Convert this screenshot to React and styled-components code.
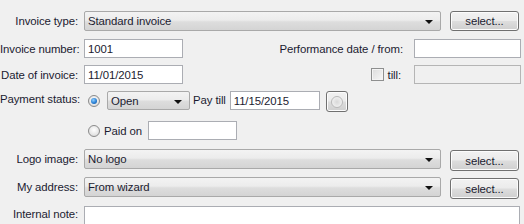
import React from "react";
import styled, { createGlobalStyle, css } from "styled-components";

const GlobalStyle = createGlobalStyle`
  html, body {
    margin: 0;
    padding: 0;
    background: #f0f0f0;
  }
  body {
    font-family: "Liberation Sans", Arial, sans-serif;
    font-size: 11.4px;
    color: #1b1b30;
  }
`;

const Form = styled.div`
  width: 524px;
  height: 224px;
  overflow: hidden;
  padding-top: 11px;
  box-sizing: border-box;
  display: flex;
  flex-direction: column;
`;

const Row = styled.div`
  display: flex;
  align-items: ${(p) => p.$align || "center"};
  height: ${(p) => p.$h}px;
  margin-top: ${(p) => p.$mt || 0}px;
`;

const Label = styled.div`
  width: 78px;
  margin-right: 6px;
  text-align: right;
  white-space: nowrap;
  letter-spacing: -0.1px;
  flex-shrink: 0;
  ${(p) => p.$lh && css`line-height: ${p.$lh}px;`}
`;

const Text = styled.span`
  white-space: nowrap;
  letter-spacing: -0.1px;
  margin-left: ${(p) => p.$ml || 0}px;
  margin-right: ${(p) => p.$mr || 0}px;
  ${(p) => p.$lh && css`line-height: ${p.$lh}px;`}
`;

const Combo = styled.div`
  width: ${(p) => p.$w}px;
  height: ${(p) => p.$h || 20}px;
  box-sizing: border-box;
  border: 1px solid #a9a9a9;
  border-radius: 2px;
  background: linear-gradient(#f3f3f3 0%, #ececec 45%, #dddddd 55%, #d4d4d4 100%);
  display: flex;
  align-items: center;
  padding-left: 3px;
  padding-right: 7px;
  letter-spacing: -0.1px;
  flex-shrink: 0;
  margin-left: ${(p) => p.$ml || 0}px;
`;

const ComboText = styled.span`
  flex: 1;
  white-space: nowrap;
`;

const Arrow = styled.span`
  width: 0;
  height: 0;
  border-left: 4px solid transparent;
  border-right: 4px solid transparent;
  border-top: 4px solid #111;
  margin-top: 2px;
`;

const Button = styled.div`
  width: ${(p) => p.$w}px;
  height: ${(p) => p.$h || 21}px;
  box-sizing: border-box;
  border: 1px solid #707070;
  border-radius: 3px;
  background: linear-gradient(#f2f2f2 0%, #ebebeb 48%, #dddddd 52%, #cfcfcf 100%);
  box-shadow: inset 0 0 0 1px #fcfcfc;
  display: flex;
  align-items: center;
  justify-content: center;
  letter-spacing: -0.1px;
  flex-shrink: 0;
  margin-left: ${(p) => p.$ml || 0}px;
  margin-top: ${(p) => p.$mt || 0}px;
`;

const Input = styled.div`
  width: ${(p) => p.$w}px;
  height: ${(p) => p.$h || 19}px;
  box-sizing: border-box;
  border: 1px solid ${(p) => (p.$disabled ? "#b5b5b5" : "#abadb3")};
  background: ${(p) => (p.$disabled ? "#f0f0f0" : "#ffffff")};
  display: flex;
  align-items: center;
  padding-left: 3px;
  letter-spacing: -0.1px;
  flex-shrink: 0;
  margin-left: ${(p) => p.$ml || 0}px;
  margin-right: ${(p) => p.$mr || 0}px;
`;

const Spacer = styled.div`
  flex: 1;
`;

const Radio = styled.div`
  width: 12px;
  height: 12px;
  border-radius: 50%;
  box-sizing: border-box;
  border: 1px solid #8a8a8a;
  background: radial-gradient(circle at 50% 40%, #ffffff 0%, #e6e6e6 60%, #cfcfcf 100%);
  display: flex;
  align-items: center;
  justify-content: center;
  flex-shrink: 0;
  margin-left: ${(p) => p.$ml || 0}px;
  margin-top: ${(p) => p.$mt || 0}px;
  &::after {
    content: "";
    display: ${(p) => (p.$checked ? "block" : "none")};
    width: 6px;
    height: 6px;
    border-radius: 50%;
    background: radial-gradient(circle at 40% 35%, #8fd0ff 0%, #2a7fd4 55%, #0d4d92 100%);
  }
`;

const Check = styled.div`
  width: 13px;
  height: 13px;
  box-sizing: border-box;
  border: 1px solid #8e8f8f;
  background: linear-gradient(135deg, #dcdcdc, #f7f7f7);
  box-shadow: inset 0 0 0 1px #f4f4f4;
  flex-shrink: 0;
`;

const DotButton = styled(Button)`
  &::after {
    content: "";
    width: 10px;
    height: 10px;
    border-radius: 50%;
    border: 1px solid #b9b9b9;
    background: radial-gradient(circle, #d8d8d8 0%, #efefef 70%);
  }
`;

const TextArea = styled.div`
  width: 436px;
  height: 40px;
  box-sizing: border-box;
  border: 1px solid #abadb3;
  background: #fff;
  flex-shrink: 0;
`;

export default function App() {
  return (
    <>
      <GlobalStyle />
      <Form>
        <Row $h={20}>
          <Label>Invoice type:</Label>
          <Combo $w={357}>
            <ComboText>Standard invoice</ComboText>
            <Arrow />
          </Combo>
          <Button $w={69} $h={20} $ml={9}>select...</Button>
        </Row>

        <Row $h={19} $mt={8}>
          <Label>Invoice number:</Label>
          <Input $w={99}>1001</Input>
          <Spacer />
          <Text $mr={11}>Performance date / from:</Text>
          <Input $w={107} $mr={3}></Input>
        </Row>

        <Row $h={19} $mt={7}>
          <Label>Date of invoice:</Label>
          <Input $w={99}>11/01/2015</Input>
          <Spacer />
          <Check />
          <Text $ml={4} $mr={13}>till:</Text>
          <Input $w={107} $mr={3} $disabled></Input>
        </Row>

        <Row $h={21} $mt={7} $align="flex-start">
          <Label $lh={16}>Payment status:</Label>
          <Radio $checked $ml={4} $mt={4} />
          <Combo $w={83} $h={19} $ml={7}>
            <ComboText>Open</ComboText>
            <Arrow />
          </Combo>
          <Text $ml={3} $lh={19}>Pay till</Text>
          <Input $w={90} $ml={4}>11/15/2015</Input>
          <DotButton $w={22} $h={21} $ml={6} />
        </Row>

        <Row $h={19} $mt={9}>
          <Label />
          <Radio $ml={4} />
          <Text $ml={4}>Paid on</Text>
          <Input $w={89} $ml={6}></Input>
        </Row>

        <Row $h={22} $mt={9} $align="flex-start">
          <Label $lh={20}>Logo image:</Label>
          <Combo $w={357}>
            <ComboText>No logo</ComboText>
            <Arrow />
          </Combo>
          <Button $w={69} $ml={9} $mt={1}>select...</Button>
        </Row>

        <Row $h={22} $mt={6} $align="flex-start">
          <Label $lh={20}>My address:</Label>
          <Combo $w={357}>
            <ComboText>From wizard</ComboText>
            <Arrow />
          </Combo>
          <Button $w={69} $ml={9} $mt={1}>select...</Button>
        </Row>

        <Row $h={40} $mt={7} $align="flex-start">
          <Label $lh={16}>Internal note:</Label>
          <TextArea />
        </Row>
      </Form>
    </>
  );
}
